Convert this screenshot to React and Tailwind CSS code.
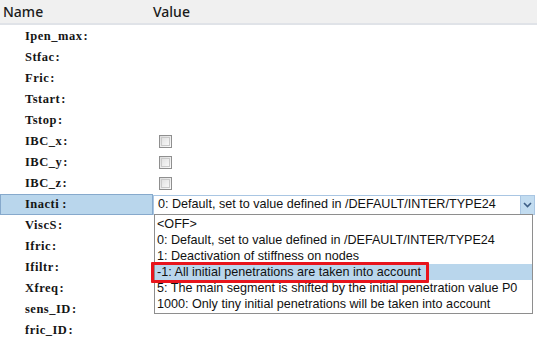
import React from "react";

const rows = [
  { n: "Ipen_max", c: ":" },
  { n: "Stfac", c: ":" },
  { n: "Fric", c: ":" },
  { n: "Tstart", c: ":" },
  { n: "Tstop", c: ":" },
  { n: "IBC_x", c: ":", cb: true },
  { n: "IBC_y", c: ":", cb: true },
  { n: "IBC_z", c: ":", cb: true },
  { n: "Inacti", c: ":", sel: true },
  { n: "ViscS", c: ":" },
  { n: "Ifric", c: ":" },
  { n: "Ifiltr", c: ":" },
  { n: "Xfreq", c: ":" },
  { n: "sens_ID", c: ":" },
  { n: "fric_ID", c: ":" },
];

const items = [
  "<OFF>",
  "0: Default, set to value defined in /DEFAULT/INTER/TYPE24",
  "1: Deactivation of stiffness on nodes",
  "-1: All initial penetrations are taken into account",
  "5: The main segment is shifted by the initial penetration value P0",
  "1000: Only tiny initial penetrations will be taken into account",
];

function Checkbox() {
  return (
    <div className="w-[13px] h-[13px] border border-[#8f8f8f] bg-gradient-to-br from-[#dcdcdc] to-[#fbfbfb] p-[1px]">
      <div className="w-full h-full border border-[#c9c9c9] bg-gradient-to-br from-[#e2e2e2] to-[#f7f7f7]" />
    </div>
  );
}

export default function App() {
  const serif = { fontFamily: '"Liberation Serif", "DejaVu Serif", serif', letterSpacing: "0.5px" };
  const sans = { fontFamily: '"Liberation Sans", Arial, sans-serif' };
  return (
    <div className="relative w-[537px] h-[346px] bg-white overflow-hidden" style={sans}>
      <div
        className="flex h-[25px] items-center bg-[#f0f0f0] border-b-2 border-[#e0e3e8] text-[14px] text-[#1a1a1a]"
        style={{ fontFamily: '"Noto Sans", "Open Sans", sans-serif', fontWeight: 500 }}
      >
        <div className="w-[152px] pl-[3px]">Name</div>
        <div className="pl-[1px]">Value</div>
      </div>
      <div className="flex flex-col pt-[1px]">
        {rows.map((r) => (
          <div key={r.n} className="flex h-[21px] items-center">
            <div
              className={
                "w-[153px] h-full flex items-center pl-[25px] text-[12.5px] font-bold text-[#151515] " +
                (r.sel ? "bg-[#b9d6ec] border border-[#86a9cc]" : "")
              }
              style={serif}
            >
              <span className={r.sel ? "-ml-[1px]" : ""}>{r.n}</span>
              <span className={r.sel ? "ml-[3px]" : "ml-[1px]"}>{r.c}</span>
            </div>
            {r.cb && (
              <div className="pl-[6px]">
                <Checkbox />
              </div>
            )}
            {r.sel && (
              <div className="flex flex-1 h-[20px] mr-[2px] border border-[#a9c6e3] bg-white items-center">
                <div className="flex-1 pl-[4px] text-[12.6px] text-[#111] whitespace-nowrap overflow-hidden">
                  0: Default, set to value defined in /DEFAULT/INTER/TYPE24
                </div>
                <div className="w-[14px] h-full bg-[#c2dcf0] border-l border-[#a9c6e3] flex items-center justify-center">
                  <svg width="9" height="6" viewBox="0 0 9 6">
                    <path d="M1 1 L4.5 4.5 L8 1" stroke="#3e5f86" strokeWidth="1.6" fill="none" />
                  </svg>
                </div>
              </div>
            )}
          </div>
        ))}
      </div>

      <div className="absolute left-[154px] top-[214px] w-[379px] h-[100px] border border-[#8e8e8e] bg-white pt-[1px] text-[12.6px] text-[#111]">
        {items.map((t, i) => (
          <div
            key={t}
            className={"h-[16px] leading-[16px] pl-[2px] whitespace-nowrap " + (i === 3 ? "bg-[#b9d6ec]" : "")}
          >
            {t}
          </div>
        ))}
      </div>
      <div className="absolute left-[151px] top-[262px] w-[278px] h-[21px] border-[3px] border-[#e8141c] rounded-[1px]" />
    </div>
  );
}
